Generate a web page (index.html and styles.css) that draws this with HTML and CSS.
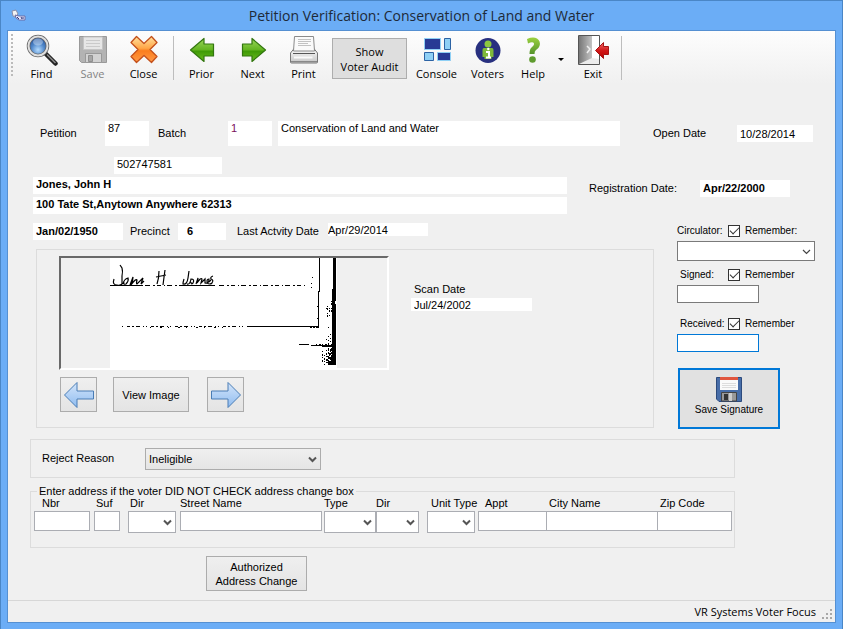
FILE: index.html
```html
<!DOCTYPE html>
<html lang="en">
<head>
    <meta charset="UTF-8">
    <meta name="viewport" content="width=device-width, initial-scale=1.0">
    <title>Petition Verification: Conservation of Land and Water</title>
    <link rel="stylesheet" href="styles.css">
</head>
<body>
    <div class="window">
        <header class="titlebar">
            <svg class="app-icon" width="16" height="14" viewBox="0 0 16 14">
                <path d="M1 2l4-1 2 4-3 3-2-1z" fill="#f3f3f3" stroke="#8b8fa8" stroke-width="1"/>
                <path d="M4 6l4 1 6 0v4l-6 0-3-2z" fill="#e9ebff" stroke="#6a6ea8" stroke-width="1"/>
                <path d="M6 8l2 2M10 8l1 2M12 8v2" stroke="#33367a"/>
            </svg>
            <h1>Petition Verification: Conservation of Land and Water</h1>
        </header>

        <div class="client">
            <!-- toolbar -->
            <nav class="toolbar">
                <span class="grip"></span>
                <button class="tool">
                    <svg width="32" height="32" viewBox="0 0 32 32">
                        <defs>
                            <radialGradient id="lens" cx=".5" cy=".7" r=".7"><stop offset="0" stop-color="#b4dcff"/><stop offset=".5" stop-color="#4f86c9"/><stop offset="1" stop-color="#1e4a93"/></radialGradient>
                        </defs>
                        <path d="M20 20L29.500 29.500" stroke="#222" stroke-width="4.500" stroke-linecap="round"/>
                        <path d="M21 20.500L29.500 29" stroke="#8b8b8b" stroke-width="1.500"/>
                        <circle cx="12" cy="12" r="9.500" fill="url(#lens)" stroke="#666" stroke-width="3.500"/>
                        <circle cx="12" cy="12" r="9.500" fill="none" stroke="#e0e0e0" stroke-width="2"/>
                        <ellipse cx="12" cy="8" rx="5" ry="3.500" fill="#fff" opacity=".35"/>
                    </svg>
                    <span>Find</span>
                </button>
                <button class="tool off" disabled>
                    <svg width="32" height="32" viewBox="0 0 32 32">
                        <path d="M2.500 2.500h27v26h-25l-2-2z" fill="#b3b3b3" stroke="#999"/>
                        <path d="M6.500 3h19v12.500h-19z" fill="#e6e6e6" stroke="#c4c4c4"/>
                        <path d="M9 6.500h14M9 9.500h14M9 12.500h14" stroke="#cacaca"/>
                        <path d="M8.500 19.500h16v9h-16z" fill="#d2d2d2" stroke="#999"/>
                        <path d="M11.500 21.500h4v6h-4z" fill="#a6a6a6" stroke="#8f8f8f"/>
                    </svg>
                    <span>Save</span>
                </button>
                <button class="tool">
                    <svg width="32" height="32" viewBox="0 0 32 32">
                        <defs>
                            <linearGradient id="cross" x2="0" y2="1"><stop offset="0" stop-color="#ffe2a0"/><stop offset=".45" stop-color="#ffa647"/><stop offset=".55" stop-color="#fb7d1d"/><stop offset="1" stop-color="#ff9a48"/></linearGradient>
                        </defs>
                        <path d="M8.500 2.500L16 9.500l7.500-7L29 8.500 22 15.500l7 7-5.500 6L16 21.500l-7.500 7L3 22.500l7-7-7-7z" fill="url(#cross)" stroke="#c4501b" stroke-width="1.300" stroke-linejoin="round"/>
                    </svg>
                    <span>Close</span>
                </button>
                <span class="separator"></span>
                <button class="tool">
                    <svg width="32" height="32" viewBox="0 0 32 32">
                        <defs>
                            <linearGradient id="leaf" x2="0" y2="1"><stop offset="0" stop-color="#9bd65c"/><stop offset=".5" stop-color="#62b41f"/><stop offset=".55" stop-color="#3f9a06"/><stop offset="1" stop-color="#6bbd20"/></linearGradient>
                        </defs>
                        <path d="M4.500 16L18 4.500V10h9.500v12H18v5.500z" fill="url(#leaf)" stroke="#32760f" stroke-width="1.200" stroke-linejoin="round"/>
                    </svg>
                    <span>Prior</span>
                </button>
                <button class="tool">
                    <svg width="32" height="32" viewBox="0 0 32 32">
                        <path d="M28.500 16L15 4.500V10H5.500v12H15v5.500z" fill="url(#leaf)" stroke="#32760f" stroke-width="1.200" stroke-linejoin="round"/>
                    </svg>
                    <span>Next</span>
                </button>
                <button class="tool">
                    <svg width="32" height="32" viewBox="0 0 32 32">
                        <defs>
                            <linearGradient id="shell" x2="0" y2="1"><stop offset="0" stop-color="#fff"/><stop offset="1" stop-color="#c4c4c4"/></linearGradient>
                        </defs>
                        <path d="M6.500 14h19l4 5v9q0 1-1 1h-25q-1 0-1-1v-9z" fill="url(#shell)" stroke="#777"/>
                        <path d="M6.500 2.500h19l1 14.500h-21z" fill="#fafafa" stroke="#8a8a8a"/>
                        <path d="M10 5.500h13M10 7.500h13M10 9.500h10M10 11.500h13" stroke="#c2c2c2"/>
                        <path d="M5 19.500h22" stroke="#555"/>
                        <path d="M6 23.500h18.500" stroke="#f9f9f9" stroke-width="2"/>
                        <path d="M3 27.500h26" stroke="#888"/>
                    </svg>
                    <span>Print</span>
                </button>
                <button class="audit">Show<br>Voter Audit</button>
                <button class="tool">
                    <svg width="32" height="32" viewBox="0 0 32 32">
                        <g stroke="#8fd0f5">
                            <path d="M3.500 4.500h16v11h-16z" fill="#273a94"/>
                            <path d="M23.500 4.500h6v11h-6z" fill="#8fd0f5" stroke="#2c63a4"/>
                            <path d="M3.500 18.500h9v8h-9z" fill="#8fd0f5" stroke="#2c63a4"/>
                            <path d="M16.500 18.500h13v8h-13z" fill="#273a94"/>
                        </g>
                    </svg>
                    <span>Console</span>
                </button>
                <button class="tool">
                    <svg width="32" height="32" viewBox="0 0 32 32">
                        <circle cx="16" cy="16.500" r="12.500" fill="#28307f"/>
                        <circle cx="16" cy="10" r="3.500" fill="#8cc63f"/>
                        <path d="M12 14h8q1.500 0 1.500 2v7h-2v2h-7v-2h-2v-7q0-2 1.500-2z" fill="#7fb93a"/>
                        <path d="M14 18h3v5.500M14 23.500h5" fill="none" stroke="#fff" stroke-width="2"/>
                        <circle cx="16.300" cy="15" r="1.200" fill="#fff"/>
                    </svg>
                    <span>Voters</span>
                </button>
                <button class="tool help">
                    <svg width="32" height="32" viewBox="0 0 32 32">
                        <defs>
                            <linearGradient id="ask" x2="0" y2="1"><stop offset="0" stop-color="#9bd13f"/><stop offset="1" stop-color="#55932c"/></linearGradient>
                        </defs>
                        <path d="M10 5q6-2.500 10-.500 4 2.500 2.500 7.500-.500 2-3.500 4-1.500 1-1.500 4h-5q0-5 2-6.500 3-2.500 2.500-4-1-2.500-6 0z" fill="url(#ask)"/>
                        <circle cx="15.500" cy="25.500" r="3.300" fill="#5f9b2e"/>
                    </svg>
                    <span>Help</span>
                </button>
                <button class="more" aria-label="More help">
                    <svg width="6" height="3" viewBox="0 0 6 3"><path d="M0 0h6L3 3z"/></svg>
                </button>
                <button class="tool exit">
                    <svg width="32" height="32" viewBox="0 0 32 32">
                        <defs>
                            <linearGradient id="door"><stop offset="0" stop-color="#777"/><stop offset="1" stop-color="#c4c4c4"/></linearGradient>
                            <linearGradient id="red" x2="0" y2="1"><stop offset="0" stop-color="#f06a6a"/><stop offset=".5" stop-color="#d11919"/><stop offset="1" stop-color="#b00"/></linearGradient>
                        </defs>
                        <path d="M1.500 1.500h21v29h-21z" fill="#ececec" stroke="#555"/>
                        <path d="M2 2h13v22L2 30z" fill="url(#door)"/>
                        <path d="M15 2h7v23l-7-1z" fill="#fff"/>
                        <path d="M10 12l3 3-3 4" fill="none" stroke="#eee" stroke-width="1.500"/>
                        <path d="M18.500 16.500l8-8v4h5v8h-5v4z" fill="url(#red)" stroke="#a51414"/>
                    </svg>
                    <span>Exit</span>
                </button>
                <span class="separator"></span>
            </nav>

            <main class="form">
                <!-- petition -->
                <section class="petition">
                    <label class="w65" for="petition">Petition</label>
                    <input class="value tall w44" id="petition" value="87" readonly>
                    <label class="w70 batch" for="batch">Batch</label>
                    <input class="value tall w44 purple" id="batch" value="1" readonly>
                    <input class="value tall name" aria-label="Petition name" value="Conservation of Land and Water" readonly>
                    <label class="w84 open" for="open">Open Date</label>
                    <input class="value w76" id="open" value="10/28/2014" readonly>
                </section>

                <!-- voter -->
                <section class="voter">
                    <div class="voter-name">
                        <input class="value voter-id" aria-label="Voter id" value="502747581" readonly>
                        <input class="value bold" aria-label="Voter name" value="Jones, John H" readonly>
                        <input class="value bold" aria-label="Address" value="100 Tate St,Anytown Anywhere 62313" readonly>
                    </div>
                    <div class="registration">
                        <label for="registered">Registration Date:</label>
                        <input class="value bold w90" id="registered" value="Apr/22/2000" readonly>
                    </div>
                </section>

                <section class="check">
                    <div class="check-left">
                        <div class="details">
                            <input class="value bold w90" aria-label="Birth date" value="Jan/02/1950" readonly>
                            <label class="w48" for="precinct">Precinct</label>
                            <input class="value bold w48 precinct" id="precinct" value="6" readonly>
                            <label class="activity" for="activity">Last Actvity Date</label>
                            <input class="value short last" id="activity" value="Apr/29/2014" readonly>
                        </div>
                        <div class="panel scan">
                            <div class="scan-main">
                                <div class="viewer">
                                    <svg width="227" height="110" viewBox="0 0 227 110" shape-rendering="crispEdges">
                                        <path d="M0 0h227v110H0z" fill="#fff"/>
                                        <g fill="none" stroke="#000">
                                            <!-- signature -->
                                            <g shape-rendering="auto" stroke-width="1.200">
                                                <path d="M10 7l2 3q1 3 0 8v8q-2 2-5 1-5 0-3-6M13 26q1-5 5-6 1 3-2 6-3 1-2-2M20 27l3-8q0 4-2 8 5-7 6-5-1 4 0 4l6-6-2 6 3-3"/>
                                                <path d="M49 13q0 7-2 13M55 12q-1 7-2 15M46 19l10-2"/>
                                                <path d="M79 13l-1 7q-1 7-5 6 0-2 1-5M77 26q3 1 4-5 4 0 2 4-2 2-2-1M86 26l2-6q0 2-1 5 4-6 5-4l-1 4 4-4v4q4 1 4-4-2 0-2 2 0 3 4-1M103 18q-3 1-2 3 3 1 1 4-2 2-5 0"/>
                                            </g>
                                            <path d="M0 27.500h33M72 27.500h33"/>
                                            <path d="M35 27.500h37M109 27.500h86" stroke-dasharray="5 3 2 2 4 3 1 2"/>
                                            <path d="M12 68.500h125" stroke-dasharray="1 4 3 2 2 2 4 3 1 2"/>
                                            <path d="M40 69.500h75" stroke-dasharray="1 9 2 6"/>
                                            <path d="M137 68.500h36M155 68.500h54"/>
                                            <path d="M200 69.500h8" stroke-dasharray="2 1"/>
                                            <path d="M209.500 0v34M208.500 33v37"/>
                                            <path d="M189 86.500h10M201 87.500h24M212 88.500h13"/>
                                            <path d="M206 86.500h18" stroke-dasharray="1 2 2 1"/>
                                            <path d="M202.500 19v1M201.500 25v1M201.500 29v1M207.500 48v1M207.500 60v1M218.500 69v1M216.500 81v1"/>
                                            <path d="M217.500 48v14M219.500 50v8M221.500 43v12M216.500 50v2" stroke-dasharray="1 1 2 3"/>
                                            <path d="M218.500 78v8M220.500 76v9M222.500 70v16" stroke-dasharray="1 3 1 2"/>
                                            <path d="M212.500 93v12M214.500 97v10M216.500 92v14M217.500 98v9" stroke-dasharray="1 2 2 1"/>
                                            <path d="M218.500 90v17M219.500 95v12M220.500 91v16M221.500 90v17" stroke-dasharray="3 1 2 2"/>
                                        </g>
                                        <path d="M223 0h3v43h-1v3h1v61h-8v-3h3v-7h1V31h1z"/>
                                    </svg>
                                </div>
                                <div class="scan-buttons">
                                    <button class="push arrow" aria-label="Previous image">
                                        <svg width="32" height="30" viewBox="0 0 32 30">
                                            <defs><linearGradient id="ice" x2="0" y2="1"><stop offset="0" stop-color="#d4e5fa"/><stop offset="1" stop-color="#8fbcf0"/></linearGradient></defs>
                                            <path d="M1.500 15L14 2.500V11h16.500v8H14v8.500z" fill="url(#ice)" stroke="#4a7db5"/>
                                        </svg>
                                    </button>
                                    <button class="push view">View Image</button>
                                    <button class="push arrow" aria-label="Next image">
                                        <svg width="32" height="30" viewBox="0 0 32 30">
                                            <path d="M30.500 15L18 2.500V11H1.500v8H18v8.500z" fill="url(#ice)" stroke="#4a7db5"/>
                                        </svg>
                                    </button>
                                </div>
                            </div>
                            <div class="scan-date">
                                <label for="scan">Scan Date</label>
                                <input class="value short" id="scan" value="Jul/24/2002" readonly>
                            </div>
                        </div>
                    </div>

                    <div class="entry">
                        <div class="entry-group">
                            <div class="entry-head">
                                <label class="entry-label wide" for="circulator">Circulator:</label>
                                <input type="checkbox" id="keep1" checked>
                                <label for="keep1">Remember:</label>
                            </div>
                            <div class="pick circulator">
                                <select id="circulator"><option></option></select>
                                <svg width="9" height="6" viewBox="0 0 9 6"><path d="M1 1l3.500 3.500L8 1" fill="none" stroke="#444" stroke-width="1.200"/></svg>
                            </div>
                        </div>
                        <div class="entry-group">
                            <div class="entry-head">
                                <label class="entry-label" for="signed">Signed:</label>
                                <input type="checkbox" id="keep2" checked>
                                <label for="keep2">Remember</label>
                            </div>
                            <input class="date" id="signed">
                        </div>
                        <div class="entry-group received">
                            <div class="entry-head">
                                <label class="entry-label" for="received">Received:</label>
                                <input type="checkbox" id="keep3" checked>
                                <label for="keep3">Remember</label>
                            </div>
                            <input class="date active" id="received">
                        </div>
                        <button class="save">
                            <svg width="26" height="26" viewBox="0 0 26 26">
                                <path d="M.5 1.500h25v24H3l-2.500-2.500z" fill="#476da8" stroke="#2c4a7c"/>
                                <path d="M4 1h18v13H4z" fill="#fafafa"/>
                                <path d="M4 1h18v3H4z" fill="#e0563f"/>
                                <path d="M6 7.500h14M6 9.500h14M6 11.500h14" stroke="#ddd"/>
                                <path d="M5.500 16.500h15v8.500h-15z" fill="#999" stroke="#444"/>
                                <path d="M8 18h4v6H8z" fill="#333"/>
                                <path d="M13 17h3v8h-3z" fill="#ccc"/>
                            </svg>
                            <span>Save Signature</span>
                        </button>
                    </div>
                </section>

                <!-- reject reason -->
                <section class="panel reject">
                    <label for="reason">Reject Reason</label>
                    <div class="pick reason">
                        <select id="reason"><option>Ineligible</option></select>
                        <svg width="9" height="7" viewBox="0 0 9 7"><path d="M1 1.500l3.500 3.500L8 1.500" fill="none" stroke="#555" stroke-width="2"/></svg>
                    </div>
                </section>

                <!-- new address -->
                <fieldset class="address">
                    <legend>Enter address if the voter DID NOT CHECK address change box</legend>
                    <div class="address-grid">
                        <div class="cell nbr"><label for="nbr">Nbr</label><input id="nbr"></div>
                        <div class="cell suf"><label for="suf">Suf</label><input id="suf"></div>
                        <div class="cell dir">
                            <label for="dir">Dir</label>
                            <div class="pick"><select id="dir"><option></option></select><svg width="9" height="7" viewBox="0 0 9 7"><path d="M1 1.500l3.500 3.500L8 1.500" fill="none" stroke="#555" stroke-width="2"/></svg></div>
                        </div>
                        <div class="cell street"><label for="street">Street Name</label><input id="street"></div>
                        <div class="cell type">
                            <label for="type">Type</label>
                            <div class="pick"><select id="type"><option></option></select><svg width="9" height="7" viewBox="0 0 9 7"><path d="M1 1.500l3.500 3.500L8 1.500" fill="none" stroke="#555" stroke-width="2"/></svg></div>
                        </div>
                        <div class="cell postdir">
                            <label for="postdir">Dir</label>
                            <div class="pick"><select id="postdir"><option></option></select><svg width="9" height="7" viewBox="0 0 9 7"><path d="M1 1.500l3.500 3.500L8 1.500" fill="none" stroke="#555" stroke-width="2"/></svg></div>
                        </div>
                        <div class="cell unit">
                            <label for="unit">Unit Type</label>
                            <div class="pick"><select id="unit"><option></option></select><svg width="9" height="7" viewBox="0 0 9 7"><path d="M1 1.500l3.500 3.500L8 1.500" fill="none" stroke="#555" stroke-width="2"/></svg></div>
                        </div>
                        <div class="cell appt"><label for="appt">Appt</label><input id="appt"></div>
                        <div class="cell joined"><label for="city">City Name</label><input id="city"></div>
                        <div class="cell joined"><label for="zip">Zip Code</label><input id="zip"></div>
                    </div>
                </fieldset>
                <button class="push authorized">Authorized<br>Address Change</button>
            </main>

            <footer class="statusbar">
                <span>VR Systems Voter Focus</span>
                <svg width="11" height="11" viewBox="0 0 11 11" fill="#a8a8a8">
                    <path d="M8 0h2v2H8zM4 4h2v2H4zM8 4h2v2H8zM0 8h2v2H0zM4 8h2v2H4zM8 8h2v2H8z"/>
                </svg>
            </footer>
        </div>
    </div>
</body>
</html>
```
FILE: styles.css
```css
*{
    margin: 0;
    padding: 0;
    box-sizing: border-box;
}
body{
    font-family: "Liberation Sans", Arial, sans-serif;
    font-size: 11px;
    line-height: 12px;
    color: #000;
}
button, input, select{
    font: inherit;
    color: inherit;
    border-radius: 0;
    outline: none;
}
label{
    white-space: nowrap;
}
svg{
    display: block;
    flex: none;
}
.window{
    min-height: 100vh;
    display: flex;
    flex-direction: column;
    padding: 0 6px 6px;
    background: #6badf6;
    border: 1px solid #4a86c6;
    border-bottom: none;
}
.titlebar{
    display: flex;
    align-items: center;
    height: 29px;
    padding: 0 20px 0 4px;
}
.titlebar h1{
    flex: 1;
    text-align: center;
    font: 14px/20px "Open Sans", "Noto Sans", sans-serif;
    color: #1e2a38;
}
.client{
    flex: 1;
    display: flex;
    flex-direction: column;
    background: #f0f0f0;
    border: 1px solid #5590d2;
}

/* toolbar */
.toolbar{
    display: flex;
    height: 53px;
    padding: 3px 3px 0;
    background: linear-gradient(#fdfdfd, #f0f0f0);
    font: 11px/16px "Open Sans", "Noto Sans", sans-serif;
}
.grip{
    width: 2px;
    height: 43px;
    margin-right: 3px;
    background: repeating-linear-gradient(#bbb 0 2px, transparent 2px 4px);
}
.tool{
    width: 51px;
    display: flex;
    flex-direction: column;
    align-items: center;
    background: none;
    border: none;
}
.off{
    color: #838383;
}
.separator{
    width: 1px;
    height: 44px;
    margin: 2px 2px 0 4px;
    background: #bdbdbd;
}
.audit{
    width: 75px;
    height: 41px;
    margin: 4px 4px 0 3px;
    background: #dedede;
    border: 1px solid #adadad;
    line-height: 15px;
}
.help{
    width: 40px;
}
.more{
    width: 16px;
    padding-top: 1px;
    display: flex;
    align-items: center;
    justify-content: center;
    background: none;
    border: none;
}
.exit{
    width: 48px;
}

/* form */
.form{
    flex: 1;
    padding: 37px 0 8px 22px;
}
.value{
    height: 17px;
    padding: 0 3px;
    background: #fff;
    border: none;
}
.tall{
    height: 25px;
    padding-bottom: 11px;
}
.short{
    height: 13px;
}
.bold{
    font-weight: bold;
}
.purple{
    color: #7a0f5c;
}
.w44{ width: 44px; }
.w48{ width: 48px; }
.w65{ width: 65px; }
.w70{ width: 70px; }
.w76{ width: 76px; }
.w84{ width: 84px; }
.w90{ width: 90px; }
.petition{
    display: flex;
    align-items: center;
    height: 25px;
    padding: 0 22px 0 10px;
}
.petition label{
    padding-bottom: 2px;
}
.batch{
    margin-left: 9px;
}
.name{
    flex: 1;
    min-width: 0;
    margin-left: 6px;
}
.open{
    margin-left: 33px;
}
.voter{
    display: flex;
    gap: 22px;
    margin-top: 11px;
    padding: 0 45px 0 3px;
}
.voter-name{
    flex: 1;
    display: flex;
    flex-direction: column;
    gap: 3px;
}
.voter-name .value{
    padding-bottom: 3px;
}
.voter-id{
    width: 108px;
    margin-left: 81px;
}
.registration{
    width: 201px;
    display: flex;
    justify-content: space-between;
    align-items: center;
    padding-top: 5px;
}
.check{
    display: flex;
    gap: 23px;
    margin-top: 9px;
    padding-right: 20px;
}
.check-left{
    flex: 1;
}
.details{
    display: flex;
    align-items: center;
    gap: 0 7px;
    padding-left: 3px;
}
.details label{
    padding-bottom: 2px;
}
.details .value{
    padding-bottom: 2px;
}
.details .w48{
    margin-right: -7px;
}
.details .precinct{
    margin: 0 4px 0 0;
    padding-left: 9px;
}
.activity{
    width: 84px;
}
.details .last{
    width: 100px;
    padding: 0;
    align-self: flex-start;
}
.panel{
    border: 1px solid #dcdcdc;
}
.scan{
    height: 179px;
    display: flex;
    gap: 22px;
    margin: 9px 0 0 6px;
    padding: 6px 22px;
}
.viewer{
    width: 330px;
    height: 114px;
    padding-left: 49px;
    border: 2px solid;
    border-color: #696969 #fff #fff #696969;
}
.scan-buttons{
    display: flex;
    margin: 7px 0 0 1px;
}
.push{
    height: 35px;
    background: linear-gradient(#efefef, #e4e4e4);
    border: 1px solid #acacac;
}
.arrow{
    width: 37px;
    display: flex;
    align-items: center;
    justify-content: center;
}
.view{
    width: 76px;
    margin: 0 18px 0 16px;
}
.scan-date{
    width: 121px;
    padding-top: 27px;
}
.scan-date label{
    display: block;
    padding: 0 3px 3px;
}
.scan-date .value{
    width: 100%;
}

/* circulator and dates */
.entry{
    width: 138px;
    padding-top: 1px;
}
.entry-head{
    display: flex;
    align-items: center;
    height: 14px;
    margin-bottom: 3px;
    font-size: 10px;
}
.entry-label{
    width: 51px;
    padding-left: 3px;
}
.wide{
    padding-left: 0;
}
.entry-head input{
    appearance: none;
    width: 12px;
    height: 12px;
    margin-right: 5px;
    border: 1px solid #333;
    background: #fff;
}
.entry-head input:checked::before{
    content: "";
    display: block;
    width: 8px;
    height: 4px;
    margin: 1px;
    border: solid #333;
    border-width: 0 0 1px 1px;
    transform: rotate(-45deg);
}
.entry-group{
    margin-bottom: 7px;
}
.received{
    margin: 14px 0 16px;
}
.pick{
    display: grid;
    position: relative;
    height: 22px;
}
.pick select{
    appearance: none;
    width: 100%;
    padding: 0 3px;
    background: #fff;
    border: 1px solid #abadb3;
}
.pick svg{
    position: absolute;
    right: 4px;
    top: 8px;
    pointer-events: none;
}
.circulator{
    height: 20px;
}
.circulator select, .date{
    border: 1px solid #7a7a7a;
}
.date{
    display: block;
    width: 82px;
    height: 18px;
    padding: 0 3px;
    background: #fff;
}
.active{
    border-color: #0078d7;
}
.save{
    width: 102px;
    height: 61px;
    margin-left: 1px;
    display: flex;
    flex-direction: column;
    align-items: center;
    gap: 2px;
    padding-top: 6px;
    background: #e1e1e1;
    border: 2px solid #0078d7;
    font-size: 10px;
}

/* lower boxes */
.reject{
    display: flex;
    align-items: center;
    gap: 33px;
    height: 39px;
    margin: 10px 100px 0 0;
    padding: 0 11px;
}
.reject label{
    width: 70px;
    padding-bottom: 2px;
}
.reason{
    width: 176px;
}
.reason select{
    background: linear-gradient(#efefef, #e5e5e5);
    border-color: #acacac;
}
.address{
    margin: 7px 100px 0 0;
    padding: 0 2px 14px 3px;
    border: 1px solid #dcdcdc;
}
.address legend{
    margin-left: 3px;
    padding: 0 2px;
}
.address-grid{
    display: grid;
    grid-template-columns: 60px 34px 50px 1fr 52px 51px 51px 69px 111px 74px;
}
.cell label{
    display: block;
    height: 14px;
    padding-left: 2px;
}
.cell input{
    display: block;
    width: 100%;
    height: 20px;
    padding: 0 3px;
    background: #fff;
    border: 1px solid #abadb3;
}
.nbr{ padding-right: 4px; }
.nbr label{ padding-left: 8px; }
.suf{ padding-right: 8px; }
.dir{ padding-right: 2px; }
.street{ padding: 0 2px; }
.street label{ padding-left: 0; }
.type label{ padding-left: 0; }
.postdir{ padding-right: 8px; }
.postdir label{ padding-left: 0; }
.unit{ padding-right: 3px; }
.unit label{ padding-left: 4px; }
.appt label{ padding-left: 7px; }
.joined{ margin-left: -1px; }
.joined label{ padding-left: 3px; }
.authorized{
    width: 101px;
    margin: 8px 0 0 176px;
    line-height: 14px;
}
.statusbar{
    display: flex;
    justify-content: flex-end;
    gap: 6px;
    height: 22px;
    padding: 3px 2px 0 0;
    border-top: 1px solid #d7d7d7;
    font: 11px/16px "Open Sans", "Noto Sans", sans-serif;
}
.statusbar svg{
    margin-top: 5px;
}
```
